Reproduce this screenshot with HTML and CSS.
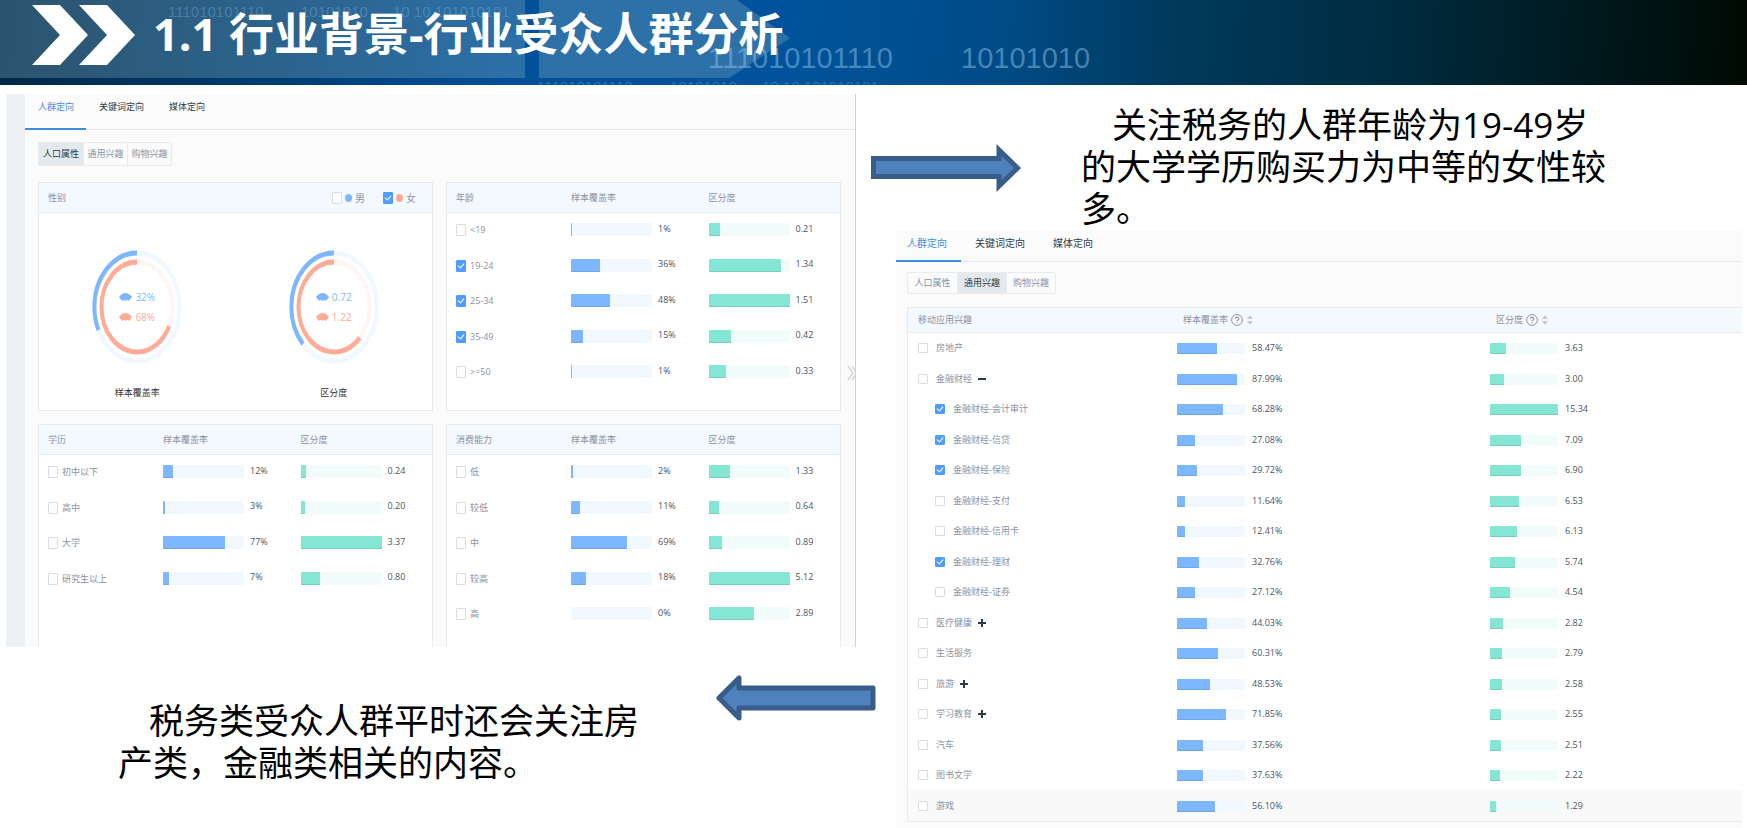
FILE: index.html
```html
<!DOCTYPE html>
<html lang="zh-CN">
<head>
<meta charset="utf-8">
<title>行业受众人群分析</title>
<link rel="stylesheet" href="styles.css">
</head>
<body>
<header class="banner">
  <svg class="banner-art" width="100%" height="85" aria-hidden="true">
    <rect class="plate" width="525" height="78"/>
    <path class="plate" d="M539 0H737L790 38L729 78H539Z"/>
    <g class="digits-small">
      <text x="168" y="17">111010101110</text>
      <text x="301" y="17">10101010</text>
      <text x="393" y="17">10 10 101010101</text>
      <text x="537" y="92">111010101110</text>
      <text x="670" y="92">10101010</text>
      <text x="762" y="92">10 10 101010101</text>
    </g>
    <g class="digits-large">
      <text x="708" y="68">111010101110</text>
      <text x="961" y="68">10101010</text>
    </g>
  </svg>
  <svg class="chevrons" width="104" height="60" viewBox="0 0 104 60" aria-hidden="true">
    <path d="M0 0H28L56 30L28 60H0L28 30ZM47 0H75L103 30L75 60H47L75 30Z" fill="#fff"/>
  </svg>
  <h1>1.1 行业背景-行业受众人群分析</h1>
</header>

<main class="slide">
  <div class="col-left">
    <section class="panel panel-people">
      <nav class="tabs">
        <button class="tab active">人群定向</button><button class="tab">关键词定向</button><button class="tab">媒体定向</button>
      </nav>
      <div class="segment">
        <button class="on">人口属性</button><button>通用兴趣</button><button>购物兴趣</button>
      </div>
      <div class="cards">
        <section class="card card-gender">
          <div class="card-head">
            <span>性别</span>
            <span class="legend">
              <label><input type="checkbox"><i class="dot blue"></i>男</label>
              <label><input type="checkbox" checked><i class="dot pink"></i>女</label>
            </span>
          </div>
          <div class="donuts">
            <figure>
              <div class="donut">
                <svg width="90" height="114" viewBox="0 0 114 114" preserveAspectRatio="none" aria-hidden="true">
                  <g transform="translate(114 0) scale(-1 1) rotate(-90 57 57)" fill="none" stroke-width="5">
                    <circle cx="57" cy="57" r="54" stroke="#f1f8ff"/>
                    <circle cx="57" cy="57" r="45" stroke="#fff5f3"/>
                    <circle cx="57" cy="57" r="54" stroke="#7db7ff" pathLength="100" stroke-dasharray="32 100"/>
                    <circle cx="57" cy="57" r="45" stroke="#ffab98" pathLength="100" stroke-dasharray="68 100"/>
                  </g>
                </svg>
                <div class="readout">
                  <span class="t-blue"><svg width="13" height="9" viewBox="0 0 13 9" aria-hidden="true"><path d="M0 4Q3 0 6.500 0T13 4L10 8Q8.500 6 6.500 8Q4.500 6 3 8Z" fill="currentColor"/></svg>32%</span>
                  <span class="t-pink"><svg width="13" height="9" viewBox="0 0 13 9" aria-hidden="true"><path d="M0 4Q3 0 6.500 0T13 4L10 8Q8.500 6 6.500 8Q4.500 6 3 8Z" fill="currentColor"/></svg>68%</span>
                </div>
              </div>
              <figcaption>样本覆盖率</figcaption>
            </figure>
            <figure>
              <div class="donut">
                <svg width="90" height="114" viewBox="0 0 114 114" preserveAspectRatio="none" aria-hidden="true">
                  <g transform="translate(114 0) scale(-1 1) rotate(-90 57 57)" fill="none" stroke-width="5">
                    <circle cx="57" cy="57" r="54" stroke="#f1f8ff"/>
                    <circle cx="57" cy="57" r="45" stroke="#fff5f3"/>
                    <circle cx="57" cy="57" r="54" stroke="#7db7ff" pathLength="100" stroke-dasharray="37 100"/>
                    <circle cx="57" cy="57" r="45" stroke="#ffab98" pathLength="100" stroke-dasharray="63 100"/>
                  </g>
                </svg>
                <div class="readout">
                  <span class="t-blue"><svg width="13" height="9" viewBox="0 0 13 9" aria-hidden="true"><path d="M0 4Q3 0 6.500 0T13 4L10 8Q8.500 6 6.500 8Q4.500 6 3 8Z" fill="currentColor"/></svg>0.72</span>
                  <span class="t-pink"><svg width="13" height="9" viewBox="0 0 13 9" aria-hidden="true"><path d="M0 4Q3 0 6.500 0T13 4L10 8Q8.500 6 6.500 8Q4.500 6 3 8Z" fill="currentColor"/></svg>1.22</span>
                </div>
              </div>
              <figcaption>区分度</figcaption>
            </figure>
          </div>
        </section>

        <section class="card">
          <table class="stats">
            <thead><tr><th>年龄</th><th>样本覆盖率</th><th>区分度</th></tr></thead>
            <tbody>
              <tr><td><label><input type="checkbox">&lt;19</label></td><td><span class="bar"><i style="width:1%"></i></span>1%</td><td><span class="bar green"><i style="width:14%"></i></span>0.21</td></tr>
              <tr><td><label><input type="checkbox" checked>19-24</label></td><td><span class="bar"><i style="width:36%"></i></span>36%</td><td><span class="bar green"><i style="width:89%"></i></span>1.34</td></tr>
              <tr><td><label><input type="checkbox" checked>25-34</label></td><td><span class="bar"><i style="width:48%"></i></span>48%</td><td><span class="bar green"><i style="width:100%"></i></span>1.51</td></tr>
              <tr><td><label><input type="checkbox" checked>35-49</label></td><td><span class="bar"><i style="width:15%"></i></span>15%</td><td><span class="bar green"><i style="width:28%"></i></span>0.42</td></tr>
              <tr><td><label><input type="checkbox">&gt;=50</label></td><td><span class="bar"><i style="width:1%"></i></span>1%</td><td><span class="bar green"><i style="width:22%"></i></span>0.33</td></tr>
            </tbody>
          </table>
        </section>

        <section class="card">
          <table class="stats">
            <thead><tr><th>学历</th><th>样本覆盖率</th><th>区分度</th></tr></thead>
            <tbody>
              <tr><td><label><input type="checkbox">初中以下</label></td><td><span class="bar"><i style="width:12%"></i></span>12%</td><td><span class="bar green"><i style="width:7%"></i></span>0.24</td></tr>
              <tr><td><label><input type="checkbox">高中</label></td><td><span class="bar"><i style="width:3%"></i></span>3%</td><td><span class="bar green"><i style="width:6%"></i></span>0.20</td></tr>
              <tr><td><label><input type="checkbox">大学</label></td><td><span class="bar"><i style="width:77%"></i></span>77%</td><td><span class="bar green"><i style="width:100%"></i></span>3.37</td></tr>
              <tr><td><label><input type="checkbox">研究生以上</label></td><td><span class="bar"><i style="width:7%"></i></span>7%</td><td><span class="bar green"><i style="width:24%"></i></span>0.80</td></tr>
            </tbody>
          </table>
        </section>

        <section class="card">
          <table class="stats">
            <thead><tr><th>消费能力</th><th>样本覆盖率</th><th>区分度</th></tr></thead>
            <tbody>
              <tr><td><label><input type="checkbox">低</label></td><td><span class="bar"><i style="width:2%"></i></span>2%</td><td><span class="bar green"><i style="width:26%"></i></span>1.33</td></tr>
              <tr><td><label><input type="checkbox">较低</label></td><td><span class="bar"><i style="width:11%"></i></span>11%</td><td><span class="bar green"><i style="width:13%"></i></span>0.64</td></tr>
              <tr><td><label><input type="checkbox">中</label></td><td><span class="bar"><i style="width:69%"></i></span>69%</td><td><span class="bar green"><i style="width:17%"></i></span>0.89</td></tr>
              <tr><td><label><input type="checkbox">较高</label></td><td><span class="bar"><i style="width:18%"></i></span>18%</td><td><span class="bar green"><i style="width:100%"></i></span>5.12</td></tr>
              <tr><td><label><input type="checkbox">高</label></td><td><span class="bar"><i style="width:0%"></i></span>0%</td><td><span class="bar green"><i style="width:56%"></i></span>2.89</td></tr>
            </tbody>
          </table>
        </section>
      </div>
      <svg class="more" width="8" height="16" viewBox="0 0 8 16" aria-hidden="true"><path d="M1 1L6 8L1 15M5 1L10 8L5 15" fill="none" stroke="#d3d6da" stroke-width="1.500"/></svg>
    </section>

    <div class="note-row note-bottom">
      <p class="note">税务类受众人群平时还会关注房<br>产类，金融类相关的内容。</p>
      <svg class="arrow-left" width="160" height="46" viewBox="0 0 160 46" aria-hidden="true"><path d="M3 23L23 3V13H157V33H23V43Z" fill="#4f81bd" stroke="#385d8a" stroke-width="5" stroke-linejoin="round"/></svg>
    </div>
  </div>

  <div class="col-right">
    <div class="note-row note-top">
      <svg class="arrow-right" width="150" height="50" viewBox="0 0 150 50" aria-hidden="true"><path d="M2.500 15.500H128V7L146.500 25L128 43V33.500H2.500Z" fill="#4f81bd" stroke="#385d8a" stroke-width="5"/></svg>
      <p class="note">关注税务的人群年龄为19-49岁<br>的大学学历购买力为中等的女性较<br>多。</p>
    </div>

    <section class="panel panel-interest">
      <nav class="tabs">
        <button class="tab active">人群定向</button><button class="tab">关键词定向</button><button class="tab">媒体定向</button>
      </nav>
      <div class="segment">
        <button>人口属性</button><button class="on">通用兴趣</button><button>购物兴趣</button>
      </div>
      <table class="interest">
        <thead>
          <tr>
            <th>移动应用兴趣</th>
            <th><span class="sortable">样本覆盖率<svg width="12" height="12" viewBox="0 0 12 12" aria-hidden="true"><circle cx="6" cy="6" r="5.400" fill="none" stroke="#8d97a8"/><path d="M4.300 4.800C4.300 2.600 7.800 2.600 7.800 4.700C7.800 6 6 6 6 7.300M6 8.200V9.300" fill="none" stroke="#8d97a8" stroke-width="1.100"/></svg><svg class="sort" width="6" height="10" viewBox="0 0 6 10" aria-hidden="true"><path d="M0 4L3 0L6 4ZM0 6L3 10L6 6Z" fill="#c3cbdb"/></svg></span></th>
            <th><span class="sortable">区分度<svg width="12" height="12" viewBox="0 0 12 12" aria-hidden="true"><circle cx="6" cy="6" r="5.400" fill="none" stroke="#8d97a8"/><path d="M4.300 4.800C4.300 2.600 7.800 2.600 7.800 4.700C7.800 6 6 6 6 7.300M6 8.200V9.300" fill="none" stroke="#8d97a8" stroke-width="1.100"/></svg><svg class="sort" width="6" height="10" viewBox="0 0 6 10" aria-hidden="true"><path d="M0 4L3 0L6 4ZM0 6L3 10L6 6Z" fill="#c3cbdb"/></svg></span></th>
          </tr>
        </thead>
        <tbody>
          <tr><td><label><input type="checkbox">房地产</label></td><td><span class="bar"><i style="width:59%"></i></span>58.47%</td><td><span class="bar green"><i style="width:23.6%"></i></span>3.63</td></tr>
          <tr><td><label><input type="checkbox">金融财经</label><button class="fold minus" aria-label="收起"></button></td><td><span class="bar"><i style="width:88%"></i></span>87.99%</td><td><span class="bar green"><i style="width:20%"></i></span>3.00</td></tr>
          <tr class="child"><td><label><input type="checkbox" checked>金融财经-会计审计</label></td><td><span class="bar"><i style="width:68.28%"></i></span>68.28%</td><td><span class="bar green"><i style="width:100%"></i></span>15.34</td></tr>
          <tr class="child"><td><label><input type="checkbox" checked>金融财经-信贷</label></td><td><span class="bar"><i style="width:27.08%"></i></span>27.08%</td><td><span class="bar green"><i style="width:46.2%"></i></span>7.09</td></tr>
          <tr class="child"><td><label><input type="checkbox" checked>金融财经-保险</label></td><td><span class="bar"><i style="width:29.72%"></i></span>29.72%</td><td><span class="bar green"><i style="width:45%"></i></span>6.90</td></tr>
          <tr class="child"><td><label><input type="checkbox">金融财经-支付</label></td><td><span class="bar"><i style="width:11.64%"></i></span>11.64%</td><td><span class="bar green"><i style="width:42.6%"></i></span>6.53</td></tr>
          <tr class="child"><td><label><input type="checkbox">金融财经-信用卡</label></td><td><span class="bar"><i style="width:12.41%"></i></span>12.41%</td><td><span class="bar green"><i style="width:40%"></i></span>6.13</td></tr>
          <tr class="child"><td><label><input type="checkbox" checked>金融财经-理财</label></td><td><span class="bar"><i style="width:32.76%"></i></span>32.76%</td><td><span class="bar green"><i style="width:37.4%"></i></span>5.74</td></tr>
          <tr class="child"><td><label><input type="checkbox">金融财经-证券</label></td><td><span class="bar"><i style="width:27.12%"></i></span>27.12%</td><td><span class="bar green"><i style="width:29.6%"></i></span>4.54</td></tr>
          <tr><td><label><input type="checkbox">医疗健康</label><button class="fold plus" aria-label="展开"></button></td><td><span class="bar"><i style="width:44.03%"></i></span>44.03%</td><td><span class="bar green"><i style="width:18.4%"></i></span>2.82</td></tr>
          <tr><td><label><input type="checkbox">生活服务</label></td><td><span class="bar"><i style="width:60.31%"></i></span>60.31%</td><td><span class="bar green"><i style="width:18.2%"></i></span>2.79</td></tr>
          <tr><td><label><input type="checkbox">旅游</label><button class="fold plus" aria-label="展开"></button></td><td><span class="bar"><i style="width:48.53%"></i></span>48.53%</td><td><span class="bar green"><i style="width:17%"></i></span>2.58</td></tr>
          <tr><td><label><input type="checkbox">学习教育</label><button class="fold plus" aria-label="展开"></button></td><td><span class="bar"><i style="width:71.85%"></i></span>71.85%</td><td><span class="bar green"><i style="width:16.8%"></i></span>2.55</td></tr>
          <tr><td><label><input type="checkbox">汽车</label></td><td><span class="bar"><i style="width:37.56%"></i></span>37.56%</td><td><span class="bar green"><i style="width:16.4%"></i></span>2.51</td></tr>
          <tr><td><label><input type="checkbox">图书文学</label></td><td><span class="bar"><i style="width:37.63%"></i></span>37.63%</td><td><span class="bar green"><i style="width:14.5%"></i></span>2.22</td></tr>
          <tr class="hover"><td><label><input type="checkbox">游戏</label></td><td><span class="bar"><i style="width:56.1%"></i></span>56.10%</td><td><span class="bar green"><i style="width:8.4%"></i></span>1.29</td></tr>
        </tbody>
      </table>
    </section>
  </div>
</main>
</body>
</html>
```
FILE: styles.css
```css
* { box-sizing: border-box; }

body {
  margin: 0;
  background: #fff;
  color: #000;
  font-family: "Open Sans", "Noto Sans CJK SC", sans-serif;
}

button {
  margin: 0;
  padding: 0;
  border: 0;
  background: none;
  font: inherit;
  color: inherit;
}

/* Banner */
.banner {
  position: relative;
  display: flex;
  align-items: flex-start;
  gap: 17px;
  height: 85px;
  padding: 5px 32px 0;
  overflow: hidden;
  background: linear-gradient(92deg, #012746 0%, #003a6b 13%, #00509a 30%, #00539a 46%, #004a85 58%, #003a5c 67%, #002d42 79%, #001a20 90%, #000a02 100%);
}
.banner-art { position: absolute; inset: 0; }
.plate { fill: #8fb9c9; fill-opacity: .31; }
.digits-small, .digits-large { font-family: "Liberation Sans", sans-serif; fill: #8cc1ea; }
.digits-small { font-size: 15px; fill-opacity: .32; }
.digits-large { font-size: 29px; fill-opacity: .5; }
.chevrons { position: relative; flex: none; }
.banner h1 {
  position: relative;
  margin: 0;
  color: #fff;
  font-size: 45px;
  line-height: 58px;
  font-weight: 700;
  white-space: nowrap;
}

/* Slide layout */
.slide {
  display: grid;
  grid-template-columns: 865fr 871fr;
  padding: 9px 5px 0 6px;
}
.note-row { display: flex; align-items: flex-start; }
.note {
  margin: 0;
  font-size: 35px;
  line-height: 42px;
  text-indent: 31px;
  white-space: nowrap;
}
.note-top { gap: 60px; padding-top: 10px; }
.arrow-right { flex: none; margin-top: 39px; }
.note-bottom { justify-content: space-between; margin-right: -5px; padding: 28px 0 0 112px; }
.note-bottom .note { padding-top: 25px; }
.arrow-left { flex: none; }

/* Panels */
.panel { position: relative; background: #fbfbfb; font-size: 9px; line-height: 14px; color: #8a93a5; }
.panel-people {
  margin-right: 15px;
  border-left: 19px solid #edf1f4;
  border-right: 1px solid #cfd1d3;
}
.panel-interest { margin-left: 25px; padding-bottom: 7px; }

.tabs { display: flex; border-bottom: 1px solid #e6eaef; color: #333b44; }
.tab { height: 36px; padding: 0 12px 8px 13px; margin-bottom: -1px; border-bottom: 2px solid transparent; }
.tab.active { color: #4a8be8; border-color: #3d8be6; }
.panel-interest .tab { height: 32px; padding: 0 14px 5px; font-size: 10px; }
.panel-interest .tab:first-child { padding-left: 11px; }

.segment {
  display: inline-flex;
  margin: 12px 13px 0;
  border: 1px solid #e9ecef;
  border-radius: 2px;
  vertical-align: top;
}
.segment button { width: 44px; height: 22px; }
.segment button + button { border-left: 1px solid #e9ecef; }
.segment .on { background: #e4e9ed; color: #2f3b45; }
.panel-interest .segment { margin: 10px 11px 0; }
.panel-interest .segment button { width: 49px; height: 20px; }

/* Cards */
.cards {
  display: grid;
  grid-template-columns: 1fr 1fr;
  gap: 13px;
  margin: 16px 14px 0 13px;
}
.card { padding-bottom: 18px; border: 1px solid #e8ebee; background: #fff; }
.card-gender { padding-bottom: 10px; }
.card:nth-child(n+3) { padding-bottom: 14px; border-bottom: 0; }
.card-head {
  display: flex;
  justify-content: space-between;
  align-items: center;
  height: 30px;
  padding: 0 16px 0 9px;
  border-bottom: 1px solid #e6ecf2;
  background: #f4f8ff;
}
.legend { display: flex; gap: 18px; font-size: 10px; }
.legend label { gap: 3px; }
.dot { width: 7px; height: 8px; border-radius: 50%; }
.blue { background: #7db7ff; }
.pink { background: #ffab98; }

.donuts { display: grid; grid-template-columns: 1fr 1fr; padding-top: 37px; }
figure { margin: 0; text-align: center; }
figcaption { margin-top: 22px; color: #333; }
.donut { display: grid; place-items: center; }
.donut > * { grid-area: 1 / 1; }
.readout { display: grid; gap: 6px; font-size: 10px; }
.readout span { display: flex; align-items: center; gap: 3px; }
.t-blue { color: #7db7ff; }
.t-pink { color: #ffab98; }

/* Checkboxes */
label { display: inline-flex; align-items: center; gap: 4px; vertical-align: middle; }
input[type="checkbox"] {
  appearance: none;
  position: relative;
  width: 10px;
  height: 12px;
  margin: 0;
  border: 1px solid #d9dde3;
  border-radius: 1px;
  background: #fff;
}
input[type="checkbox"]:checked { border-color: #4f9eff; background: #4f9eff; }
input[type="checkbox"]:checked::after {
  content: "";
  position: absolute;
  left: 2px;
  top: 1px;
  width: 3px;
  height: 5px;
  border: solid #fff;
  border-width: 0 1px 1px 0;
  transform: rotate(40deg);
}
.interest input[type="checkbox"] { height: 10px; }
.interest input[type="checkbox"]:checked::after { top: 0; }

/* Tables */
table { width: 100%; border-collapse: separate; border-spacing: 0; table-layout: fixed; }
th { padding: 0; border-bottom: 1px solid #e6ecf2; background: #f4f8ff; font-weight: 400; text-align: left; }
td { padding: 0; color: #4c5560; }
td label { color: #8a93a5; }
td:first-child, th:first-child { padding-left: 9px; }

.stats th { height: 30px; }
.stats th:nth-child(1) { width: 124px; }
.stats th:nth-child(2) { width: 35%; }
.stats tbody tr { height: 36px; }
.stats tbody tr:nth-child(even) { height: 35px; }
.stats td { padding-bottom: 4px; }
.stats td:first-child { padding-bottom: 2px; }

.bar {
  display: inline-block;
  width: 81px;
  height: 13px;
  margin-right: 6px;
  border-radius: 1px;
  background: #f1f8ff;
  vertical-align: middle;
}
.bar i {
  display: block;
  height: 100%;
  border-radius: 1px;
  background: #7db7ff;
  box-shadow: inset 0 -1px #6fa6ea;
}
.bar.green { background: #f2fcfa; }
.bar.green i { background: #86e6d4; box-shadow: inset 0 -1px #74cfbe; }

.interest { width: auto; min-width: calc(100% - 11px); margin: 13px 0 0 11px; border: solid #e6ebf1; border-width: 1px 0 1px 1px; background: #fff; }
.interest th { height: 25px; }
.interest th:nth-child(1) { width: 269px; }
.interest th:nth-child(2) { width: 313px; }
.interest td:first-child, .interest th:first-child { padding-left: 10px; }
.interest tbody tr { height: 30px; }
.interest tbody tr:nth-child(even) { height: 31px; }
.interest label { gap: 8px; }
.interest .child td:first-child { padding-left: 27px; }
.interest .bar { width: 68px; height: 11px; margin-right: 7px; }
.interest .hover td { background: #f9f9f9; }
.sortable { display: flex; align-items: center; gap: 3px; padding-left: 6px; }
.sort { margin-left: 1px; }

.fold { width: 8px; height: 8px; margin-left: 6px; vertical-align: middle; }
.minus { background: linear-gradient(#2b3b48, #2b3b48) center / 8px 2px no-repeat; }
.plus { background: linear-gradient(#2b3b48, #2b3b48) center / 8px 2px no-repeat, linear-gradient(#2b3b48, #2b3b48) center / 2px 8px no-repeat; }

.more { position: absolute; right: 0; top: 271px; }
```
